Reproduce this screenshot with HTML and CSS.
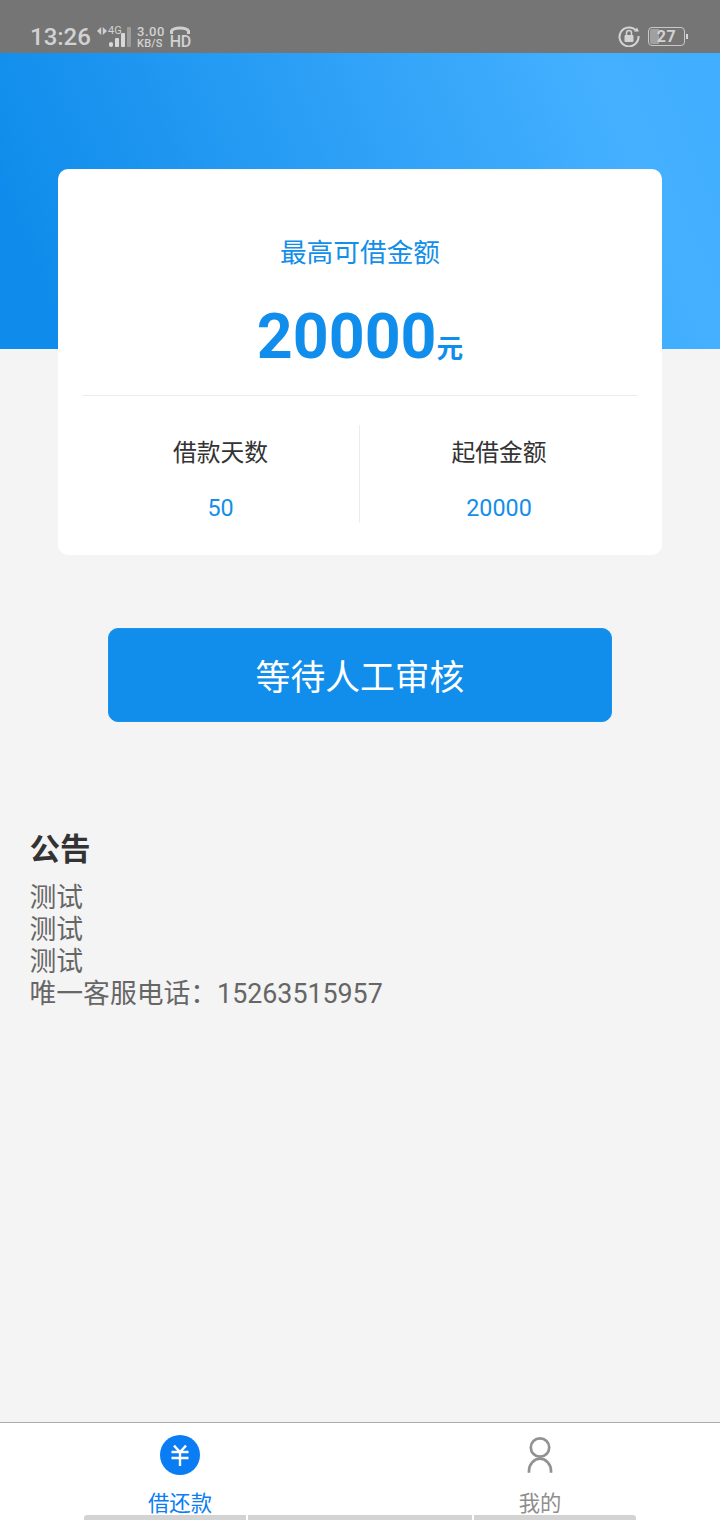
FILE: index.html
```html
<!DOCTYPE html>
<html lang="zh">
<head>
<meta charset="utf-8">
<title>借还款</title>
<link rel="stylesheet" href="styles.css">
</head>
<body>
<div class="page">
  <header class="status">
    <div class="status-left">
      <span class="clock">13:26</span>
      <div class="net">
        <svg class="arrows" width="10" height="8" viewBox="0 0 10 8"><path d="M4.200 0v8L0 4zM5.800 0v8L10 4z" fill="#cfcfcf"/></svg>
        <span class="net-type">4G</span>
      </div>
      <svg class="signal" width="22" height="20" viewBox="0 0 22 20"><rect x="0" y="15" width="4" height="5" rx="2" fill="#d8d8d8"/><rect x="6" y="11" width="4" height="9" rx="1" fill="#d8d8d8"/><rect x="12" y="6" width="4" height="14" rx="1" fill="#d8d8d8"/><rect x="18" y="0" width="4" height="20" rx="1" fill="#9c9c9c"/></svg>
      <div class="speed"><span>3.00</span><span class="speed-unit">KB/S</span></div>
      <div class="hd">
        <svg width="20" height="9" viewBox="0 0 20 9"><path d="M1.500 8V5C4 1 16 1 18.500 5v3" fill="none" stroke="#d0d0d0" stroke-width="3"/></svg>
        <span class="hd-text">HD</span>
      </div>
    </div>
    <div class="status-right">
      <svg width="22" height="22" viewBox="0 0 22 22"><path d="M18.500 6A9.500 9.500 0 1 0 20.500 11" fill="none" stroke="#d4d4d4" stroke-width="2"/><path d="M16 6.500h5L19 2.500z" fill="#d4d4d4"/><rect x="6.500" y="10" width="9" height="7" rx="1" fill="#d4d4d4"/><path d="M8.500 10V8a2.500 2.500 0 0 1 5 0v2" fill="none" stroke="#d4d4d4" stroke-width="1.500"/></svg>
      <div class="battery"><div class="battery-fill"></div><span class="battery-num">27</span></div>
      <div class="battery-tip"></div>
    </div>
  </header>

  <div class="hero"></div>

  <main class="content">
    <section class="card">
      <div class="card-head">
        <div class="card-title">最高可借金额</div>
        <div class="amount"><span class="amount-num">20000</span><span class="amount-unit">元</span></div>
      </div>
      <div class="stats">
        <div class="stat">
          <div class="stat-label">借款天数</div>
          <div class="stat-value">50</div>
        </div>
        <div class="stat">
          <div class="stat-label">起借金额</div>
          <div class="stat-value">20000</div>
        </div>
      </div>
    </section>

    <button class="action" type="button">等待人工审核</button>

    <section class="notice">
      <h2 class="notice-title">公告</h2>
      <p class="notice-line">测试</p>
      <p class="notice-line">测试</p>
      <p class="notice-line">测试</p>
      <p class="notice-line">唯一客服电话：15263515957</p>
    </section>
  </main>

  <nav class="tabbar">
    <div class="tab tab-active">
      <svg width="40" height="40" viewBox="0 0 40 40"><circle cx="20" cy="20" r="20" fill="#0a7df5"/><path d="M14 10.700l6 6.300 6-6.300M11.500 17h17M11.500 23h17M20 17v14" fill="none" stroke="#fff" stroke-width="2.400"/></svg>
      <span class="tab-label">借还款</span>
    </div>
    <div class="tab">
      <svg width="40" height="40" viewBox="0 0 40 40"><circle cx="20" cy="12.500" r="9.200" fill="none" stroke="#929292" stroke-width="2.700"/><path d="M9 37.700v-2c0-6 5-12 11-12s11 6 11 12v2" fill="none" stroke="#929292" stroke-width="2.700"/></svg>
      <span class="tab-label">我的</span>
    </div>
    <div class="gesture">
      <div class="gesture-part gesture-a"></div>
      <div class="gesture-part gesture-b"></div>
      <div class="gesture-part gesture-c"></div>
    </div>
  </nav>
</div>
</body>
</html>
```

FILE: styles.css
```css
* { box-sizing: border-box; }
html, body { margin: 0; padding: 0; }
body {
  font-family: Roboto, "Noto Sans CJK SC", sans-serif;
  background: #f4f4f4;
}
.page {
  width: 720px;
  height: 1520px;
  display: flex;
  flex-direction: column;
  overflow: hidden;
  position: relative;
}

/* status bar */
.status {
  height: 53px;
  background: #757575;
  display: flex;
  justify-content: space-between;
  align-items: flex-end;
  padding: 0 32px 4px 30px;
  color: #d2d2d2;
  flex: none;
}
.status-left, .status-right { display: flex; align-items: center; }
.status-left { height: 26px; margin-bottom: -1px; }
.clock { font-size: 24px; line-height: 26px; font-weight: 500; width: 67px; }
.net { display: flex; align-items: center; gap: 1px; height: 22px; margin-top: -13px; width: 0; }
.arrows { flex: none; }
.net-type { font-size: 11px; line-height: 12px; }
.signal { margin-left: 12px; }
.speed {
  display: flex;
  flex-direction: column;
  font-size: 12px;
  line-height: 13px;
  margin-left: 6px;
  align-items: flex-start;
  font-weight: 500;
}
.speed span:first-child { font-size: 13px; letter-spacing: 0.5px; }
.speed-unit { font-size: 11px; line-height: 12px; letter-spacing: 0.2px; }
.hd { display: flex; flex-direction: column; align-items: center; margin-left: 5px; }
.hd-text { font-size: 16px; line-height: 14px; font-weight: 500; letter-spacing: -0.5px; }
.status-right { height: 26px; }
.status-right svg { margin-right: 8px; }
.battery {
  width: 37px;
  height: 19px;
  border: 1px solid #c8c8c8;
  border-radius: 4px;
  position: relative;
  display: flex;
  align-items: center;
  justify-content: center;
}
.battery-fill {
  position: absolute;
  left: 1px; top: 1px; bottom: 1px;
  width: 9px;
  background: #a0a0a0;
  border-radius: 2px 0 0 2px;
}
.battery-num { position: relative; font-size: 16px; line-height: 17px; font-weight: 700; letter-spacing: 0.5px; }
.battery-tip { width: 2px; height: 5px; background: #d4d4d4; margin-left: 1px; }

/* hero */
.hero {
  height: 296px;
  flex: none;
  background: linear-gradient(68deg, #0f8ceb 8%, #45b0ff 85%, #41adfe 100%);
}

.content {
  flex: 1;
  margin-top: -180px;
  display: flex;
  flex-direction: column;
  align-items: center;
}

/* card */
.card {
  width: 604px;
  height: 386px;
  background: #fff;
  border-radius: 10px;
  padding: 0 24px;
  position: relative;
  flex: none;
}
.card-head {
  height: 227px;
  border-bottom: 1px solid #ececec;
  text-align: center;
  padding-top: 65px;
}
.card-title {
  font-size: 26.7px;
  line-height: 38px;
  color: #138fe9;
}
.amount {
  color: #118deb;
  margin-top: 27px;
  display: flex;
  justify-content: center;
  align-items: baseline;
  height: 76px;
}
.amount-num { font-size: 62.67px; line-height: 76px; font-weight: 700; }
.amount-unit { font-size: 26.67px; font-weight: 700; line-height: 30px; }
.stats {
  display: flex;
  margin-top: 29px;
  height: 98px;
}
.stat { flex: 0 0 278px; text-align: center; }
.stat:first-child { border-right: 1px solid #ececec; }
.stat-label { font-size: 23.8px; line-height: 56px; color: #333; margin-bottom: 0; }
.stat-value { font-size: 23.3px; line-height: 28px; margin-top: 13px; color: #138fe9; }

/* action */
.action {
  margin-top: 73px;
  width: 504px;
  height: 94px;
  border: 1px solid #1a92ee;
  border-radius: 10px;
  background: #118deb;
  color: #fff;
  font-family: inherit;
  font-size: 34.8px;
  padding: 0;
  flex: none;
}

/* notice */
.notice {
  align-self: stretch;
  margin-top: 106px;
  padding: 0 30px 0 29.5px;
}
.notice-title {
  margin: 0 0 10px;
  font-size: 30.5px;
  line-height: 44px;
  font-weight: 700;
  color: #333;
}
.notice-line {
  margin: 0;
  font-size: 26.8px;
  line-height: 32px;
  color: #666;
}

/* tabbar */
.tabbar {
  flex: none;
  height: 98px;
  background: #fff;
  border-top: 1px solid #aaa;
  display: flex;
  position: relative;
}
.tab {
  flex: 1;
  display: flex;
  flex-direction: column;
  align-items: center;
  padding-top: 12px;
}
.tab-label {
  font-size: 21.33px;
  line-height: 30px;
  margin-top: 14px;
  color: #8e8e8e;
}
.tab-active .tab-label { color: #0a7df5; }
.gesture {
  position: absolute;
  left: 84px;
  bottom: 0;
  display: flex;
  gap: 2px;
  height: 5px;
}
.gesture-part { background: #d3d3d3; height: 5px; }
.gesture-a { width: 162px; border-radius: 3px 0 0 0; }
.gesture-b { width: 224px; }
.gesture-c { width: 162px; border-radius: 0 3px 0 0; }
```
